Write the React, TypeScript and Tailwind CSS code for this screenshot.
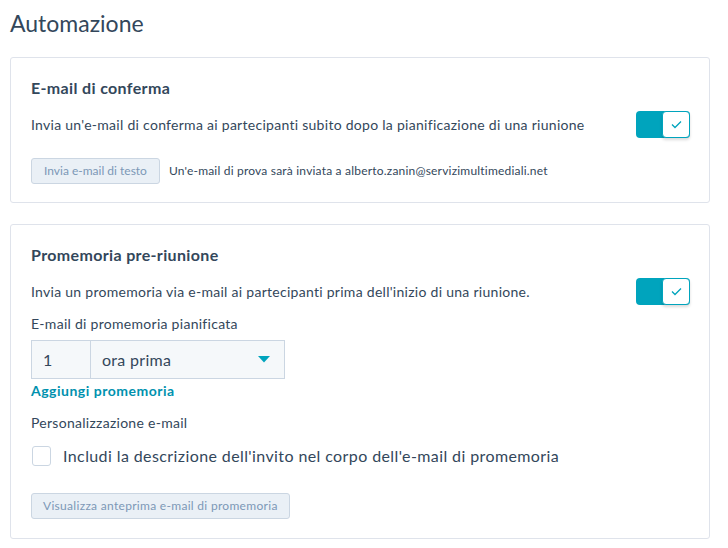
import React from "react";

const font = { fontFamily: "Lato, 'Open Sans', sans-serif" };

/* toggle on: teal track, white knob with check */
function Toggle() {
    return (
        <div className="relative w-[54px] h-[27px] shrink-0">
            <div className="absolute inset-0 rounded-[4px] bg-[#00a4bd]" />
            <div className="absolute right-0 top-0 w-[28px] h-[27px] rounded-[4px] bg-white border border-[#00a4bd] shadow-[0_2px_3px_rgba(0,0,0,0.15)] flex items-center justify-center">
                <svg width="11" height="9" viewBox="0 0 11 9" fill="none">
                    <path d="M1 4.5 L4 7.5 L10 1.5" stroke="#00a4bd" strokeWidth="1.3" />
                </svg>
            </div>
        </div>
    );
}

function Card({ children }: { children: React.ReactNode }) {
    return (
        <section className="ml-[10px] w-[700px] rounded-[3px] border border-[#dfe3eb] bg-white pl-[20px] pr-[19px]">
            {children}
        </section>
    );
}

export default function App() {
    return (
        <div className="w-[728px] h-[548px] bg-white text-[#33475b] overflow-hidden" style={font}>
            <h1 className="pl-[10px] pt-[8px] text-[23px] leading-[30px] text-[#33475b]">Automazione</h1>

            <div className="mt-[19px]">
                <Card>
                    <h2 className="pt-[20px] text-[16px] font-bold leading-[20px] tracking-[0.35px]">E-mail di conferma</h2>
                    <div className="mt-[13px] flex items-center justify-between">
                        <p className="text-[14px] leading-[20px] tracking-[0.28px]">
                            Invia un'e-mail di conferma ai partecipanti subito dopo la pianificazione di una riunione
                        </p>
                        <Toggle />
                    </div>
                    <div className="mt-[20px] mb-[18px] flex items-center gap-[9px]">
                        <button className="h-[26px] px-[12px] rounded-[3px] border border-[#cbd6e2] bg-[#eaf0f6] text-[12px] text-[#7c98b6]">
                            Invia e-mail di testo
                        </button>
                        <span className="text-[12px] tracking-[0.2px]">
                            Un'e-mail di prova sarà inviata a alberto.zanin@servizimultimediali.net
                        </span>
                    </div>
                </Card>
            </div>

            <div className="mt-[21px]">
                <Card>
                    <h2 className="pt-[20px] text-[16px] font-bold leading-[20px] tracking-[0.35px]">Promemoria pre-riunione</h2>
                    <div className="mt-[13px] flex items-center justify-between">
                        <p className="text-[14px] leading-[20px] tracking-[0.28px]">
                            Invia un promemoria via e-mail ai partecipanti prima dell'inizio di una riunione.
                        </p>
                        <Toggle />
                    </div>
                    <p className="mt-[9px] text-[14px] leading-[20px] tracking-[0.28px]">E-mail di promemoria pianificata</p>
                    <div className="mt-[6px] flex w-[254px] h-[39px] border border-[#cbd6e2] bg-[#f5f8fa] text-[16px] tracking-[0.3px]">
                        <div className="w-[59px] border-r border-[#cbd6e2] flex items-center pl-[11px]">1</div>
                        <div className="flex-1 flex items-center justify-between pl-[11px] pr-[14px]">
                            <span>ora prima</span>
                            <svg width="12" height="7" viewBox="0 0 12 7">
                                <path d="M0 0 H12 L6 6.5 Z" fill="#00a4bd" />
                            </svg>
                        </div>
                    </div>
                    <a className="block mt-[2px] text-[14px] font-bold leading-[20px] tracking-[0.5px] text-[#0091ae]">Aggiungi promemoria</a>
                    <p className="mt-[12px] text-[14px] leading-[20px] tracking-[0.28px]">Personalizzazione e-mail</p>
                    <label className="mt-[11px] flex items-center gap-[12px] pl-[1px]">
                        <span className="w-[19px] h-[20px] rounded-[3px] border border-[#cbd6e2] bg-white" />
                        <span className="text-[16px] tracking-[0.4px]">
                            Includi la descrizione dell'invito nel corpo dell'e-mail di promemoria
                        </span>
                    </label>
                    <button className="mt-[25px] mb-[19px] h-[26px] px-[11px] rounded-[3px] border border-[#cbd6e2] bg-[#eaf0f6] text-[12px] tracking-[0.3px] text-[#7c98b6]">
                        Visualizza anteprima e-mail di promemoria
                    </button>
                </Card>
            </div>
        </div>
    );
}
